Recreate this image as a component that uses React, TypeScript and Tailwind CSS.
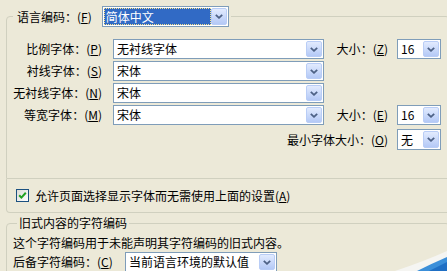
import React from "react";

// XP-style combobox: sunken white field + the pale blue drop button
function Combo({
  value,
  className,
  selected = false,
}: {
  value: string;
  className: string;
  selected?: boolean;
}) {
  return (
    <div className={`flex items-stretch border border-[#7f9db9] bg-white p-px ${className}`}>
      <div className="flex-1 min-w-0 flex items-center">
        {selected ? (
          <span className="flex items-center h-full w-full bg-[#316ac5] text-white pl-[2px] outline outline-1 outline-dotted outline-[#f8e38a] -outline-offset-1">
            {value}
          </span>
        ) : (
          <span className="pl-[2px] whitespace-nowrap">{value}</span>
        )}
      </div>
      <div className="w-[16px] flex items-center justify-center rounded-[2px] border border-[#b9cdf6] bg-gradient-to-b from-[#e2ebfe] to-[#b4c9f6]">
        <svg width="8" height="5" viewBox="0 0 8 5">
          <path d="M0.8 0.8 L4 3.8 L7.2 0.8" fill="none" stroke="#4d6185" strokeWidth="1.8" />
        </svg>
      </div>
    </div>
  );
}

// label with an underlined access key, e.g. 比例字体：(P)
function Label({ text, k }: { text: string; k: string }) {
  return (
    <span className="whitespace-nowrap">
      {text}：(<span className="underline">{k}</span>)
    </span>
  );
}

const fontRows = [
  { text: "比例字体", k: "P", value: "无衬线字体", size: { k: "Z", value: "16" } },
  { text: "衬线字体", k: "S", value: "宋体" },
  { text: "无衬线字体", k: "N", value: "宋体" },
  { text: "等宽字体", k: "M", value: "宋体", size: { k: "E", value: "16" } },
];

export default function App() {
  return (
    <div className="relative w-[447px] h-[271px] overflow-hidden bg-[#ece9d8] text-[12px] leading-[14px] text-black font-['Noto_Sans_CJK_SC',sans-serif]">
      {/* Fonts for the chosen language */}
      <fieldset className="ml-[6px] mt-[6px] w-[444px] border border-[#d0d0bf] rounded-t-[4px] pt-[12px] pb-[28px]">
        <legend className="ml-[6px] pl-[4px] pr-[2px]">
          <div className="flex items-center gap-[10px]">
            <Label text="语言编码" k="F" />
            <Combo value="简体中文" className="w-[127px] h-[21px]" selected />
          </div>
        </legend>

        <div className="w-[434px] flex flex-col gap-[2px]">
          {fontRows.map((r) => (
            <div key={r.k} className="flex items-center h-[20px]">
              <div className="w-[95px] text-right">
                <Label text={r.text} k={r.k} />
              </div>
              <Combo value={r.value} className="ml-[11px] w-[211px] h-[20px]" />
              {r.size && (
                <>
                  <div className="ml-[9px] w-[55px] text-right">
                    <Label text="大小" k={r.size.k} />
                  </div>
                  <Combo value={r.size.value} className="ml-[9px] w-[44px] h-[20px]" />
                </>
              )}
            </div>
          ))}
          <div className="mt-[2px] flex items-center justify-end h-[21px]">
            <Label text="最小字体大小" k="O" />
            <Combo value="无" className="ml-[9px] w-[44px] h-[21px]" />
          </div>
        </div>
      </fieldset>

      {/* Allow pages to choose fonts */}
      <div className="ml-[6px] w-[444px] h-[34px] border-x border-b border-[#d0d0bf] rounded-b-[4px] flex items-center pl-[9px] gap-[6px]">
        <div className="w-[13px] h-[13px] border border-[#1c5180] bg-gradient-to-br from-[#dcdcd7] to-white flex items-center justify-center">
          <svg width="9" height="9" viewBox="0 0 9 9">
            <path d="M1.2 4.2 L3.4 6.6 L7.8 1.8" fill="none" stroke="#21a121" strokeWidth="2" />
          </svg>
        </div>
        <span className="whitespace-nowrap">
          允许页面选择显示字体而无需使用上面的设置(<span className="underline">A</span>)
        </span>
      </div>

      {/* Legacy content encoding */}
      <fieldset className="ml-[6px] mt-[3px] w-[444px] h-[80px] border border-[#d0d0bf] rounded-[4px] pl-[6px] pt-[6px]">
        <legend className="ml-[4px] px-[2px]">旧式内容的字符编码</legend>
        <div className="whitespace-nowrap">这个字符编码用于未能声明其字符编码的旧式内容。</div>
        <div className="mt-[2px] flex items-center h-[20px]">
          <div className="w-[112px]">
            <Label text="后备字符编码" k="C" />
          </div>
          <Combo value="当前语言环境的默认值" className="w-[152px] h-[20px]" />
        </div>
      </fieldset>

      {/* corner of the desktop wallpaper showing through */}
      <svg className="absolute right-0 bottom-0" width="52" height="22" viewBox="0 0 52 22">
        <path d="M0 22 Q30 12 52 2 L52 22 Z" fill="#f5f5f2" />
        <path d="M22 22 Q38 14 52 8 L52 22 Z" fill="#3b8fd9" />
        <path d="M34 22 Q44 17 52 13 L52 22 Z" fill="#1f6fc4" />
      </svg>
    </div>
  );
}
